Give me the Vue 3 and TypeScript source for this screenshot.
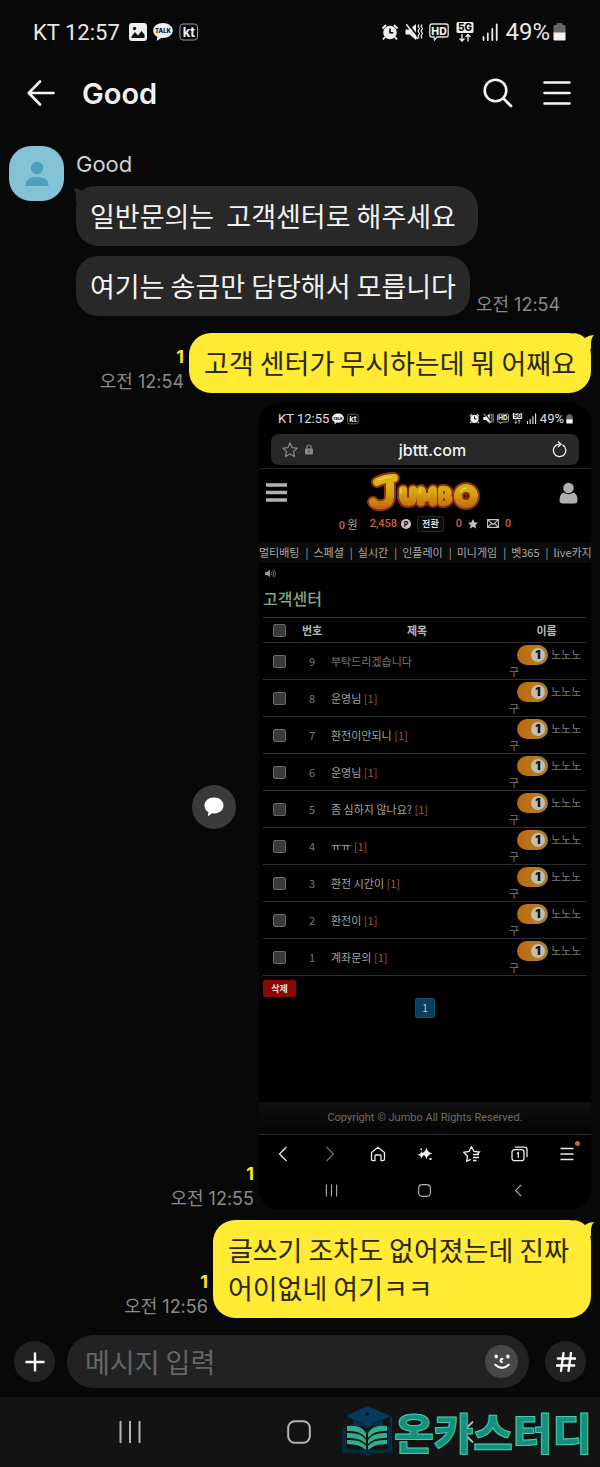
<script setup lang="ts">
import { h } from 'vue'

interface Post {
  no: number
  title: string
  replies: number
}

interface Glyph {
  box: string
  body: string
}

const posts: Post[] = [
  { no: 9, title: '부탁드리겠습니다', replies: 0 },
  { no: 8, title: '운영님', replies: 1 },
  { no: 7, title: '환전이안되니', replies: 1 },
  { no: 6, title: '운영님', replies: 1 },
  { no: 5, title: '좀 심하지 않나요?', replies: 1 },
  { no: 4, title: 'ㅠㅠ', replies: 1 },
  { no: 3, title: '환전 시간이', replies: 1 },
  { no: 2, title: '환전이', replies: 1 },
  { no: 1, title: '계좌문의', replies: 1 },
]

const categories: string[] = ['멀티배팅', '스페셜', '실시간', '인플레이', '미니게임', '벳365', 'live카지노']

// Icons drawn both in the phone's own bars and, smaller, in the shared screenshot.
const glyphs: Record<string, Glyph> = {
  talk: {
    box: '0 0 20 20',
    body: '<path d="M10 1C4.500 1 .2 4.300.2 8.600c0 2.700 1.700 5 4.200 6.300L3.700 19l4.400-3c.6.100 1.200.100 1.900.100 5.500 0 9.800-3.200 9.800-7.500S15.500 1 10 1z" fill="#eee"/><text x="10" y="11" font-family="Inter, sans-serif" font-size="6" font-weight="800" text-anchor="middle" fill="#111">TALK</text>',
  },
  kt: {
    box: '0 0 20 20',
    body: '<rect x="1" y="2" width="17.500" height="16" rx="3" fill="none" stroke="#999" stroke-width="1"/><text x="9.800" y="14.500" font-family="Inter, sans-serif" font-size="13" font-weight="700" text-anchor="middle" fill="#eee">kt</text>',
  },
  alarm: {
    box: '0 0 18 18',
    body: '<path d="M1.500 5.500 5 2M16.500 5.500 13 2M4 14l-2 2.500M14 14l2 2.500" stroke="#eee" stroke-width="1.800"/><circle cx="9" cy="9.500" r="6.800" fill="#eee"/><path d="M9 5.500v4.300h3.300" fill="none" stroke="#0a0a0a" stroke-width="1.600"/>',
  },
  mute: {
    box: '0 0 18 18',
    body: '<path d="M.5 6.500h4L11 1v16l-6.500-5.500h-4z" fill="#eee"/><path d="M3 .7 13 13.500" stroke="#0a0a0a" stroke-width="1.800"/><path d="M1.300 1.300 12.500 16" stroke="#eee" stroke-width="1.500"/><path d="M14 1.500l-1 2 1.500 2-1.500 2.500 1.500 2.500-1.500 2.500 1 2.500M17 1.500l-1 2 1.500 2L16 8l1.500 2.500L16 13l1 2.500" fill="none" stroke="#eee" stroke-width="1.200"/>',
  },
  hd: {
    box: '0 0 20 18',
    body: '<path d="M3 1h14q2.200 0 2.200 2.200v8.600Q19.200 14 17 14H8l-2.500 3-.5-3H3Q.8 14 .8 11.800V3.200Q.8 1 3 1z" fill="none" stroke="#ddd" stroke-width="1.300"/><text x="10" y="11.500" font-family="Inter, sans-serif" font-size="10.500" font-weight="800" text-anchor="middle" fill="#eee">HD</text>',
  },
  '5g': {
    box: '0 0 18 20',
    body: '<rect x=".5" y="0" width="17" height="11" rx="1.500" fill="#eee"/><text x="9" y="9" font-family="Inter, sans-serif" font-size="10" font-weight="800" text-anchor="middle" fill="#0a0a0a">5G</text><path d="M6 12v7M3.500 16.500 6 19l2.500-2.500M12 19.500v-7M9.500 15 12 12.500l2.500 2.500" fill="none" stroke="#eee" stroke-width="1.300"/>',
  },
  signal: {
    box: '0 0 17 18',
    body: '<path d="M2 14v3M6.300 10.500V17M10.800 6v11M15.200 1.500V17" stroke="#eee" stroke-width="1.800" stroke-linecap="round"/>',
  },
  battery: {
    box: '0 0 13 18',
    body: '<path d="M3.500 2V1q0-1 1-1h4q1 0 1 1v1H11q1.500 0 1.500 1.500V10H.5V3.500Q.5 2 2 2z" fill="#666"/><path d="M.5 9.500h12v6.800q0 1.200-1.200 1.200H1.700Q.5 17.500.5 16.300z" fill="#f2f2f2"/>',
  },
  recents: {
    box: '0 0 24 24',
    body: '<path d="M2.500 1v22M12 1v22M21.500 1v22" stroke="#b4b4b4" stroke-width="2"/>',
  },
  square: {
    box: '0 0 24 24',
    body: '<rect x="1.200" y="1.200" width="21.600" height="21.600" rx="6.500" fill="none" stroke="#b4b4b4" stroke-width="2"/>',
  },
  chevron: {
    box: '0 0 24 24',
    body: '<path d="M17 1.500 6.500 12 17 22.500" fill="none" stroke="#b4b4b4" stroke-width="2"/>',
  },
}

const Icon = (props: { name: string }) =>
  h('svg', { viewBox: glyphs[props.name].box, innerHTML: glyphs[props.name].body, 'aria-hidden': 'true' })
Icon.props = ['name']
</script>

<template>
  <div class="phone">
    <div class="status">
      <span class="clock">KT 12:57</span>
      <svg class="ic18" viewBox="0 0 18 18" aria-hidden="true">
        <rect x="0" y="0" width="18" height="18" rx="3" fill="#eee" />
        <path d="M2.500 13.500 6 9l3 3.500L12.500 8l3 3.500v3.500h-13z" fill="#111" />
        <circle cx="5.500" cy="5.500" r="1.700" fill="#111" />
      </svg>
      <Icon name="talk" class="ic20" />
      <Icon name="kt" class="ic20" />
      <span class="fill"></span>
      <Icon name="alarm" class="ic18" />
      <Icon name="mute" class="ic18" />
      <Icon name="hd" class="ic20" />
      <Icon name="5g" class="ic20" />
      <Icon name="signal" class="ic18" />
      <span class="charge">49%<Icon name="battery" class="cell" /></span>
    </div>

    <header class="bar">
      <button type="button" class="plain" aria-label="뒤로">
        <svg width="28" height="26" viewBox="0 0 28 26"><path d="M26.500 13H2M13 1.500 1.800 13 13 24.500" fill="none" stroke="#f5f5f5" stroke-width="2.600" stroke-linecap="round" stroke-linejoin="round" /></svg>
      </button>
      <h1>Good</h1>
      <button type="button" class="plain" aria-label="검색">
        <svg width="30" height="30" viewBox="0 0 30 30"><circle cx="12.500" cy="12.500" r="10.800" fill="none" stroke="#f5f5f5" stroke-width="2.600" /><path d="M20.500 20.500 28 28" stroke="#f5f5f5" stroke-width="2.800" stroke-linecap="round" /></svg>
      </button>
      <button type="button" class="plain" aria-label="메뉴">
        <svg width="28" height="26" viewBox="0 0 28 26"><path d="M1.500 2.500h25M1.500 13h25M1.500 23.500h25" stroke="#f5f5f5" stroke-width="2.600" stroke-linecap="round" /></svg>
      </button>
    </header>

    <main class="chat">
      <section class="received">
        <div class="avatar">
          <svg width="24" height="26" viewBox="0 0 24 26" aria-hidden="true"><circle cx="12" cy="7" r="6.200" fill="#4d9fba" /><path d="M.5 25q0-9 11.500-9t11.500 9z" fill="#4d9fba" /></svg>
        </div>
        <div class="stack">
          <p class="name">Good</p>
          <p class="bubble gray trailing">
            <svg class="tail left" viewBox="0 0 20 16" aria-hidden="true"><path d="M0 2q5 0 9 3Q13 1 20 0v16H3V9Q3 5 0 2z" fill="#282828" /></svg>일반문의는&nbsp; 고객센터로 해주세요</p>
          <div class="line">
            <p class="bubble gray">여기는 송금만 담당해서 모릅니다</p>
            <span class="time">오전 12:54</span>
          </div>
        </div>
      </section>

      <div class="sent">
        <div class="meta"><b>1</b><span class="time">오전 12:54</span></div>
        <p class="bubble yellow">
          <svg class="tail right" viewBox="0 0 20 16" aria-hidden="true"><path d="M20 2q-5 0-9 3Q7 1 0 0v16h17V9q0-4 3-7z" fill="#ffeb33" /></svg>고객 센터가 무시하는데 뭐 어째요</p>
      </div>

      <div class="sent">
        <div class="side">
          <button type="button" class="share" aria-label="공유">
            <svg width="22" height="22" viewBox="0 0 22 22"><path d="M11 1.500C5.500 1.500 1.500 5 1.500 9.500c0 3 1.600 5.300 4 6.500l-.8 4.500 4.300-3.200c7 .9 11.500-3 11.500-7.800 0-4.500-4-8-9.500-8z" fill="#fff" /></svg>
          </button>
          <div class="meta"><b>1</b><span class="time">오전 12:55</span></div>
        </div>

        <article class="shot">
          <div class="s-status">
            <span>KT 12:55</span>
            <Icon name="talk" class="ic12" />
            <Icon name="kt" class="ic12" />
            <span class="fill"></span>
            <Icon name="alarm" class="ic11" />
            <Icon name="mute" class="ic11" />
            <Icon name="hd" class="ic12" />
            <Icon name="5g" class="ic11" />
            <Icon name="signal" class="ic11" />
            <span class="s-charge">49%<Icon name="battery" class="s-cell" /></span>
          </div>

          <div class="url">
            <svg width="16" height="16" viewBox="0 0 16 16" aria-hidden="true"><path d="M8 1l2.100 4.600 5 .6-3.700 3.400 1 4.900L8 12l-4.400 2.500 1-4.900L.9 6.200l5-.6z" fill="none" stroke="#8a8a8a" stroke-width="1.200" stroke-linejoin="round" /></svg>
            <svg width="8" height="11" viewBox="0 0 8 11" aria-hidden="true"><rect x="0" y="4.500" width="8" height="6" rx="1" fill="#8a8a8a" /><path d="M2 5V3a2 2 0 0 1 4 0v2" fill="none" stroke="#8a8a8a" stroke-width="1.200" /><path d="M4 6.500v2" stroke="#282828" /></svg>
            <span>jbttt.com</span>
            <button type="button" class="plain" aria-label="새로고침">
              <svg width="15" height="17" viewBox="0 0 15 17"><path d="M10.500 3.900A6.200 6.200 0 1 1 7.500 3.200M6 .5l3 2.700-3 2.700" fill="none" stroke="#f2f2f2" stroke-width="1.300" /></svg>
            </button>
          </div>

          <div class="site">
            <button type="button" class="plain" aria-label="사이트 메뉴">
              <svg width="21" height="19" viewBox="0 0 21 19"><path d="M0 2h21M0 9.500h21M0 17h21" stroke="#b0b0b0" stroke-width="3.400" /></svg>
            </button>
            <svg width="116" height="42" viewBox="0 0 116 42" role="img" aria-label="JUMBO">
              <defs>
                <linearGradient id="gold" gradientUnits="userSpaceOnUse" x1="0" y1="3" x2="0" y2="38">
                  <stop offset="0" stop-color="#dcb816" />
                  <stop offset=".5" stop-color="#d8a412" />
                  <stop offset="1" stop-color="#c0600c" />
                </linearGradient>
              </defs>
              <g fill="none" stroke="#8c3410" stroke-width="12" stroke-linecap="round" stroke-linejoin="round">
                <path d="M12 10q8-4 17-4M25 8v16q0 8-8 9-6 1-9-3" />
                <path d="M38 18v7q1 5 5 5 5 0 5-5v-7M56 30V18l6 8 6-8v12M77 18v12h3q6-3 1-6 4-4-1-6z" />
                <circle cx="101" cy="24" r="8" />
              </g>
              <g fill="none" stroke="url(#gold)" stroke-width="8" stroke-linecap="round" stroke-linejoin="round">
                <path d="M12 10q8-4 17-4M25 8v16q0 8-8 9-6 1-9-3" />
                <path d="M38 18v7q1 5 5 5 5 0 5-5v-7" />
                <path d="M56 30V18l6 8 6-8v12" />
                <path d="M77 18v12h3q6-3 1-6 4-4-1-6z" />
                <circle cx="101" cy="24" r="8" />
              </g>
              <path d="M43 16v7M62 17v3M62 30v3M79 20v1M79 27v1M101 22v4" fill="none" stroke="#7a2c0c" stroke-width="2" stroke-linecap="round" />
              <path d="M13 8q7-3 14-3M36 17v4M55 17v4M95 20q3-4 7-4" fill="none" stroke="#e6cf44" stroke-width="1.500" stroke-linecap="round" />
            </svg>
            <button type="button" class="plain" aria-label="내 정보">
              <svg width="19" height="22" viewBox="0 0 19 22"><circle cx="9.500" cy="6" r="5.300" fill="#b0b0b0" /><path d="M4.500 10.500Q9.500 14 14.500 10.500 18.500 12 18.500 18q0 3.500-3 3.500h-12q-3 0-3-3.500 0-6 4-7.500z" fill="#b0b0b0" /></svg>
            </button>
          </div>

          <div class="wallet">
            <span><b>0</b> 원</span>
            <span class="points"><b>2,458</b><svg width="10" height="10" viewBox="0 0 10 10" aria-hidden="true"><circle cx="5" cy="5" r="5" fill="#c4c4c4" /><text x="5" y="7.500" font-family="Inter, sans-serif" font-size="7" font-weight="800" text-anchor="middle" fill="#111">P</text></svg></span>
            <button type="button" class="swap">전환</button>
            <b class="coupons">0</b>
            <svg width="10" height="10" viewBox="0 0 16 16" aria-hidden="true"><path d="M8 0l2.300 5.300 5.700.5-4.300 3.800L13 15.500l-5-3-5 3 1.300-5.900L0 5.800l5.700-.5z" fill="#c4c4c4" /></svg>
            <svg class="mail" width="12" height="9" viewBox="0 0 12 9" aria-hidden="true"><path d="M.6.600h10.800v7.800H.6zM.6.600 6 5.500 11.400.6M.6 8.400 4.500 4.500M11.400 8.400 7.500 4.500" fill="none" stroke="#c4c4c4" stroke-width="1.100" /></svg>
            <b>0</b>
          </div>

          <nav class="cats">
            <a v-for="c in categories" :key="c" href="#">{{ c }}</a>
          </nav>

          <div class="notice">
            <svg width="11" height="9" viewBox="0 0 11 9" aria-hidden="true"><path d="M0 3h2l3-2.500v8L2 6H0z" fill="#999" /><path d="M6.300 2.800q1.300 1.700 0 3.400M7.700 1.500q2.400 3 0 6M9.200.5q3 4 0 8" fill="none" stroke="#888" stroke-width=".8" /></svg>
          </div>

          <h2>고객센터</h2>
          <table>
            <thead>
              <tr>
                <th class="c-check"><input type="checkbox" aria-label="전체 선택" /></th>
                <th class="c-no">번호</th>
                <th>제목</th>
                <th class="c-name">이름</th>
              </tr>
            </thead>
            <tbody>
              <tr v-for="p in posts" :key="p.no">
                <td class="c-check"><input type="checkbox" :aria-label="`${p.no}번 선택`" /></td>
                <td class="c-no">{{ p.no }}</td>
                <td class="c-title" :class="{ replied: p.replies }">{{ p.title }} <em v-if="p.replies">[{{ p.replies }}]</em></td>
                <td class="c-name">
                  <div class="writer"><span class="level"><i>1</i></span><span>노노노</span></div>
                  <div class="rest">구</div>
                </td>
              </tr>
            </tbody>
          </table>
          <button type="button" class="delete">삭제</button>
          <div class="pager"><a href="#" aria-current="page">1</a></div>

          <footer class="copy">Copyright © Jumbo All Rights Reserved.</footer>

          <div class="tools">
            <button type="button" class="plain" aria-label="이전"><svg width="16" height="16" viewBox="0 0 16 16"><path d="M11.500 1 4.500 8l7 7" /></svg></button>
            <button type="button" class="plain dim" aria-label="다음"><svg width="16" height="16" viewBox="0 0 16 16"><path d="M4.500 1l7 7-7 7" /></svg></button>
            <button type="button" class="plain" aria-label="홈"><svg width="16" height="16" viewBox="0 0 16 16"><path d="M1.500 6.500 8 1.300l6.500 5.200V13q0 1.700-1.700 1.700H11V10q0-1-1-1H6q-1 0-1 1v4.700H3.200Q1.500 14.700 1.500 13z" /></svg></button>
            <button type="button" class="plain" aria-label="AI"><svg width="16" height="16" viewBox="0 0 16 16"><path class="solid" d="M9.500 1.500q.8 5 6 6-5.200 1-6 6-.8-5-6-6 5.200-1 6-6zM4.500 5q.6 3.200 4 3.800-3.400.6-4 3.900Q4 9.400.5 8.800 4 8.200 4.500 5zM12.500 12h2v2h-2zM3.500 2.500h1.500v1.500h-1.500z" /></svg></button>
            <button type="button" class="plain" aria-label="북마크"><svg width="18" height="16" viewBox="0 0 18 16"><path d="M14.500 8 16.500 6 11 5.400 8.500.8 6 5.400.8 6.300l3.700 3.900-.8 5 4-1.900M10 8.500h6M10 11.500h6M10 14.500h3.500" /></svg></button>
            <button type="button" class="plain" aria-label="탭"><svg width="17" height="16" viewBox="0 0 17 16"><rect x="1" y="3.700" width="12" height="11" rx="2.500" /><path d="M4 1.200h9.500q2.500 0 2.500 2.500V11M6 7.500l1.300-.8v5" /></svg></button>
            <button type="button" class="plain more" aria-label="더보기"><svg width="16" height="16" viewBox="0 0 16 16"><path d="M1.500 2.500h13M1.500 8h13M1.500 13.500h13" /></svg></button>
          </div>
          <div class="s-nav">
            <Icon name="recents" class="s-key" />
            <Icon name="square" class="s-key" />
            <Icon name="chevron" class="s-key" />
          </div>
        </article>
      </div>

      <div class="sent">
        <div class="meta"><b>1</b><span class="time">오전 12:56</span></div>
        <p class="bubble yellow trailing">
          <svg class="tail right" viewBox="0 0 20 16" aria-hidden="true"><path d="M20 2q-5 0-9 3Q7 1 0 0v16h17V9q0-4 3-7z" fill="#ffeb33" /></svg>글쓰기 조차도 없어졌는데 진짜<br />어이없네 여기ㅋㅋ</p>
      </div>
    </main>

    <form class="composer" @submit.prevent>
      <button type="button" class="round" aria-label="첨부">
        <svg width="20" height="20" viewBox="0 0 20 20"><path d="M10 .5v19M.5 10h19" stroke="#fff" stroke-width="2.400" /></svg>
      </button>
      <div class="field">
        <input type="text" placeholder="메시지 입력" aria-label="메시지 입력" />
        <button type="button" class="emoji" aria-label="이모티콘">
          <svg width="18" height="18" viewBox="0 0 20 20"><ellipse cx="3.500" cy="4" rx="1.900" ry="2.200" fill="#fff" /><ellipse cx="16.500" cy="4" rx="1.900" ry="2.200" fill="#fff" /><path d="M10.500 6.500q-2.500.3-2 2.500.3 1 1.500 1M2.500 13q7.500 7 15 0" fill="none" stroke="#fff" stroke-width="2.200" stroke-linecap="round" /></svg>
        </button>
      </div>
      <button type="button" class="round" aria-label="샵검색">
        <svg width="20" height="20" viewBox="0 0 20 20"><path d="M7.500 1 5 19M15 1l-2.500 18M1.800 6.500h17.400M.8 13.500h17.400" stroke="#fff" stroke-width="2.300" stroke-linecap="round" /></svg>
      </button>
    </form>

    <div class="sysnav">
      <button type="button" class="plain" aria-label="최근 앱"><Icon name="recents" class="key" /></button>
      <button type="button" class="plain" aria-label="홈 화면"><Icon name="square" class="key" /></button>
      <button type="button" class="plain" aria-label="뒤로 가기"><Icon name="chevron" class="key" /></button>
      <div class="brand">
        <svg width="54" height="52" viewBox="0 0 54 52" aria-hidden="true">
          <path d="M2 23l4-1v22l21 1 21-1V22l4 1v25q-16-2-25 3-9-5-25-3z" fill="#062b42" />
          <path d="M6 11 27 1l24 10-24 10z" fill="#063a5c" />
          <path d="M13 15v7q14-3 14 4 0-7 16-4v-7l-16 6zM50 11v10l2 3V12z" fill="#06304c" />
          <circle cx="27" cy="9" r="2" fill="#031a2a" />
          <g fill="#2fae90">
            <path d="M7 21q14-2 19 7v5q-6-8-19-7zM47 21q-14-2-19 7v5q6-8 19-7z" />
            <path d="M7 28q14-1 19 7v4q-6-7-19-6zM47 28q-14-1-19 7v4q6-7 19-6z" />
            <path d="M7 35q14-1 19 6v4q-6-6-19-6zM47 35q-14-1-19 6v4q6-6 19-6z" />
          </g>
        </svg>
        <strong>온카스터디</strong>
      </div>
    </div>
  </div>
</template>

<style>
html,
body {
  margin: 0;
  background: #080808;
}
</style>

<style scoped>
.phone {
  background: #080808;
  color: #f0f0f0;
  font-family: Inter, "Noto Sans CJK KR", sans-serif;
  overflow: hidden;
}
.phone * {
  box-sizing: border-box;
}
p, h1, h2 {
  margin: 0;
}
svg {
  display: block;
  flex: none;
}
button {
  font: inherit;
  color: inherit;
  border: 0;
  padding: 0;
  display: flex;
  align-items: center;
  justify-content: center;
}
.plain {
  background: none;
}
.fill {
  flex: 1;
}
.ic18 { width: 18px; height: 18px; }
.ic20 { width: 20px; height: 20px; }
.ic12 { width: 12px; height: 12px; }
.ic11 { width: 11px; height: 11px; }

.status {
  display: flex;
  align-items: center;
  gap: 6px;
  height: 64px;
  padding: 0 34px 0 33px;
  color: #e8e8e8;
}
.clock, .charge {
  font-family: Roboto, sans-serif;
}
.clock {
  margin-right: 3px;
  font-size: 22px;
}
.charge {
  display: flex;
  align-items: center;
  gap: 3px;
  font-size: 24px;
}
.cell {
  width: 13px;
  height: 18px;
}

.bar {
  display: flex;
  align-items: center;
  gap: 30px;
  height: 58px;
  padding: 0 29px 0 27px;
}
.bar h1 {
  flex: 1;
  font-size: 29px;
  font-weight: 600;
  margin-left: -3px;
}

.chat {
  padding: 24px 9px 17px;
}
.received {
  display: flex;
  gap: 12px;
}
.avatar {
  flex: none;
  display: flex;
  align-items: center;
  justify-content: center;
  width: 55px;
  height: 55px;
  border-radius: 22px;
  background: #84c2d6;
}
.name {
  font-size: 22px;
  line-height: 36px;
  margin-bottom: 4px;
  color: #d0d0d0;
}
.bubble {
  position: relative;
  width: fit-content;
  padding: 11px 14px;
  border-radius: 22px;
  font-family: "Noto Sans CJK KR", sans-serif;
  font-size: 27px;
  line-height: 38px;
}
.gray {
  background: #282828;
  color: #f2f2f2;
}
.yellow {
  padding: 11px 15px;
  background: #ffeb33;
  color: #2b2710;
}
.trailing {
  padding-right: 22px;
}
.tail {
  position: absolute;
  top: 0;
  width: 20px;
  height: 16px;
}
.tail.left { left: -3px; }
.tail.right { right: -3px; }
.line {
  display: flex;
  align-items: flex-end;
  gap: 6px;
  margin-top: 10px;
}
.time {
  font-size: 18px;
  line-height: 22px;
  color: #8a8a8a;
  white-space: nowrap;
}
.sent {
  display: flex;
  justify-content: flex-end;
  align-items: flex-end;
  gap: 5px;
  margin-top: 10px;
}
.received + .sent {
  margin-top: 17px;
}
.meta {
  display: flex;
  flex-direction: column;
  align-items: flex-end;
}
.meta b {
  font-size: 18px;
  line-height: 28px;
  color: #f5e034;
}
.side {
  display: grid;
  align-self: stretch;
  justify-items: end;
}
.side > * {
  grid-area: 1 / 1;
}
.side .meta {
  align-self: end;
}
.share {
  align-self: center;
  width: 44px;
  height: 44px;
  margin-right: 18px;
  border-radius: 50%;
  background: #3a3a3a;
}

.shot {
  flex: 0 1 332px;
  min-width: 0;
  border-radius: 20px;
  background: #000;
  overflow: hidden;
  color: #a8a8a8;
  font-family: "Noto Sans CJK KR", sans-serif;
  font-size: 11px;
}
.s-status {
  display: flex;
  align-items: center;
  gap: 3px;
  height: 31px;
  padding: 0 18px 0 19px;
  color: #e0e0e0;
  font-family: Roboto, sans-serif;
  font-size: 13px;
}
.s-charge {
  display: flex;
  align-items: center;
  gap: 2px;
}
.s-cell {
  width: 7px;
  height: 10px;
}
.url {
  display: flex;
  align-items: center;
  gap: 7px;
  height: 31px;
  margin: 0 12px;
  padding: 0 12px 0 11px;
  border-radius: 8px;
  background: #282828;
  color: #f2f2f2;
  font-family: Inter, sans-serif;
  font-size: 16px;
  font-weight: 500;
}
.url span {
  flex: 1;
  text-align: center;
}
.site {
  display: flex;
  align-items: center;
  justify-content: space-between;
  height: 48px;
  margin-top: 3px;
  padding: 0 13px 0 7px;
  border-top: 1px solid #242424;
}
.wallet {
  display: flex;
  align-items: center;
  justify-content: center;
  gap: 6px;
  height: 15px;
  margin-bottom: 11px;
}
.wallet b {
  color: #c8643c;
  font-family: Roboto, sans-serif;
  font-size: 11px;
  font-weight: 500;
}
.points {
  display: flex;
  align-items: center;
  gap: 4px;
  margin-left: 6px;
}
.swap {
  height: 16px;
  padding: 0 4px;
  border: 1px solid #262626;
  border-radius: 2px;
  background: #0c0c0c;
  color: #ddd;
  font-size: 9px;
  font-weight: 700;
}
.coupons {
  margin-left: 6px;
}
.mail {
  margin-left: 3px;
}
.cats {
  display: flex;
  height: 21px;
  overflow: hidden;
  background: #0b0b0b;
  line-height: 21px;
}
.cats a {
  flex: none;
  color: #a8a8a8;
  text-decoration: none;
}
.cats a + a::before {
  content: "|";
  margin: 0 5px 0 6px;
}
.notice {
  height: 21px;
  padding: 6px;
}
h2 {
  padding-left: 4px;
  font-size: 16px;
  line-height: 28px;
  font-weight: 500;
  color: #82a882;
}
table {
  width: calc(100% - 8px);
  margin: 5px 4px 0;
  border-collapse: collapse;
  table-layout: fixed;
}
tr {
  border-top: 1px solid #2c2c2c;
}
tbody tr:last-child {
  border-bottom: 1px solid #2c2c2c;
}
th {
  height: 25px;
  padding: 0;
  color: #b8b8b8;
  font-weight: 700;
}
td {
  height: 37px;
  padding: 0;
  line-height: 14px;
}
.c-check {
  width: 33px;
}
.c-no {
  width: 32px;
  text-align: center;
}
td.c-no, td.c-title {
  color: #777;
}
td.c-title {
  padding-left: 3px;
}
td.c-title.replied {
  color: #a4a4a4;
}
.c-title em {
  font-style: normal;
  color: #a05634;
}
.c-name {
  width: 81px;
}
td.c-name {
  padding: 2px 0 0 3px;
  vertical-align: top;
  color: #7a7a7a;
}
.writer {
  display: flex;
  align-items: flex-start;
  gap: 3px;
  height: 20px;
  padding-left: 8px;
}
.writer > span:last-child {
  line-height: 18px;
}
.rest {
  line-height: 12px;
}
input[type="checkbox"] {
  appearance: none;
  display: block;
  width: 13px;
  height: 13px;
  margin: 0 auto;
  border: 1px solid #6a6a6a;
  border-radius: 2px;
  background: #3a3a3a;
}
.level {
  display: flex;
  align-items: center;
  justify-content: flex-end;
  width: 31px;
  height: 20px;
  padding-right: 3px;
  border-radius: 10px;
  background: linear-gradient(90deg, #b8680f, #b97a1c 60%, #9c8434);
}
.level i {
  width: 14px;
  height: 14px;
  border-radius: 50%;
  background: #c2beb0;
  color: #111;
  font: 900 12px/14px Inter, sans-serif;
  text-align: center;
}
.delete {
  width: 33px;
  height: 17px;
  margin: 4px 0 0 4px;
  border-radius: 2px;
  background: #8c0808;
  color: #ddd;
  font-size: 9px;
  font-weight: 700;
}
.pager {
  display: flex;
  justify-content: center;
  margin-top: 1px;
}
.pager a {
  width: 20px;
  height: 20px;
  border: 1px solid #14536f;
  border-radius: 2px;
  background: #073f5c;
  color: #c8c8c8;
  font-size: 10px;
  line-height: 18px;
  text-align: center;
  text-decoration: none;
}
.copy {
  margin-top: 84px;
  background: linear-gradient(#101010, #040404);
  color: #6c6c6c;
  font-family: Roboto, sans-serif;
  line-height: 32px;
  text-align: center;
}
.tools {
  display: grid;
  grid-template-columns: repeat(7, 1fr);
  height: 38px;
  border-top: 1px solid #2c2c2c;
}
.tools svg {
  fill: none;
  stroke: #ececec;
  stroke-width: 1.3;
}
.tools .solid {
  fill: #f2f2f2;
  stroke: none;
}
.dim {
  opacity: .45;
}
.more {
  position: relative;
}
.more::after {
  content: "";
  position: absolute;
  top: 6px;
  right: 11px;
  width: 5px;
  height: 5px;
  border-radius: 50%;
  background: #d4623c;
}
.s-nav {
  display: grid;
  grid-template-columns: repeat(3, 1fr);
  place-items: center;
  padding: 12px 26px 13px;
}
.s-key {
  width: 13px;
  height: 13px;
}

.composer {
  display: flex;
  align-items: center;
  gap: 12px;
  padding: 0 14px 9px;
}
.round {
  flex: none;
  width: 41px;
  height: 41px;
  border-radius: 50%;
  background: #222;
}
.field + .round {
  margin-left: 4px;
}
.field {
  flex: 1;
  min-width: 0;
  display: flex;
  align-items: center;
  height: 53px;
  padding: 0 11px 0 18px;
  border-radius: 27px;
  background: #222;
}
.field input {
  flex: 1;
  min-width: 0;
  border: 0;
  padding: 0;
  outline: 0;
  background: none;
  color: #eee;
  font-family: "Noto Sans CJK KR", sans-serif;
  font-size: 27px;
}
.field input::placeholder {
  color: #666;
  opacity: 1;
}
.emoji {
  width: 33px;
  height: 33px;
  border-radius: 50%;
  background: #484848;
}
.sysnav {
  position: relative;
  display: grid;
  grid-template-columns: repeat(3, 1fr);
  height: 70px;
  padding: 0 48px 0 45px;
  background: #131313;
}
.key {
  width: 24px;
  height: 24px;
}
.brand {
  position: absolute;
  right: 8px;
  top: 8px;
  display: flex;
  align-items: center;
}
.brand strong {
  font-family: "Noto Sans CJK KR", sans-serif;
  font-size: 43px;
  line-height: 52px;
  font-weight: 900;
  color: #16907a;
  -webkit-text-stroke: 1px #43cfae;
}
</style>
